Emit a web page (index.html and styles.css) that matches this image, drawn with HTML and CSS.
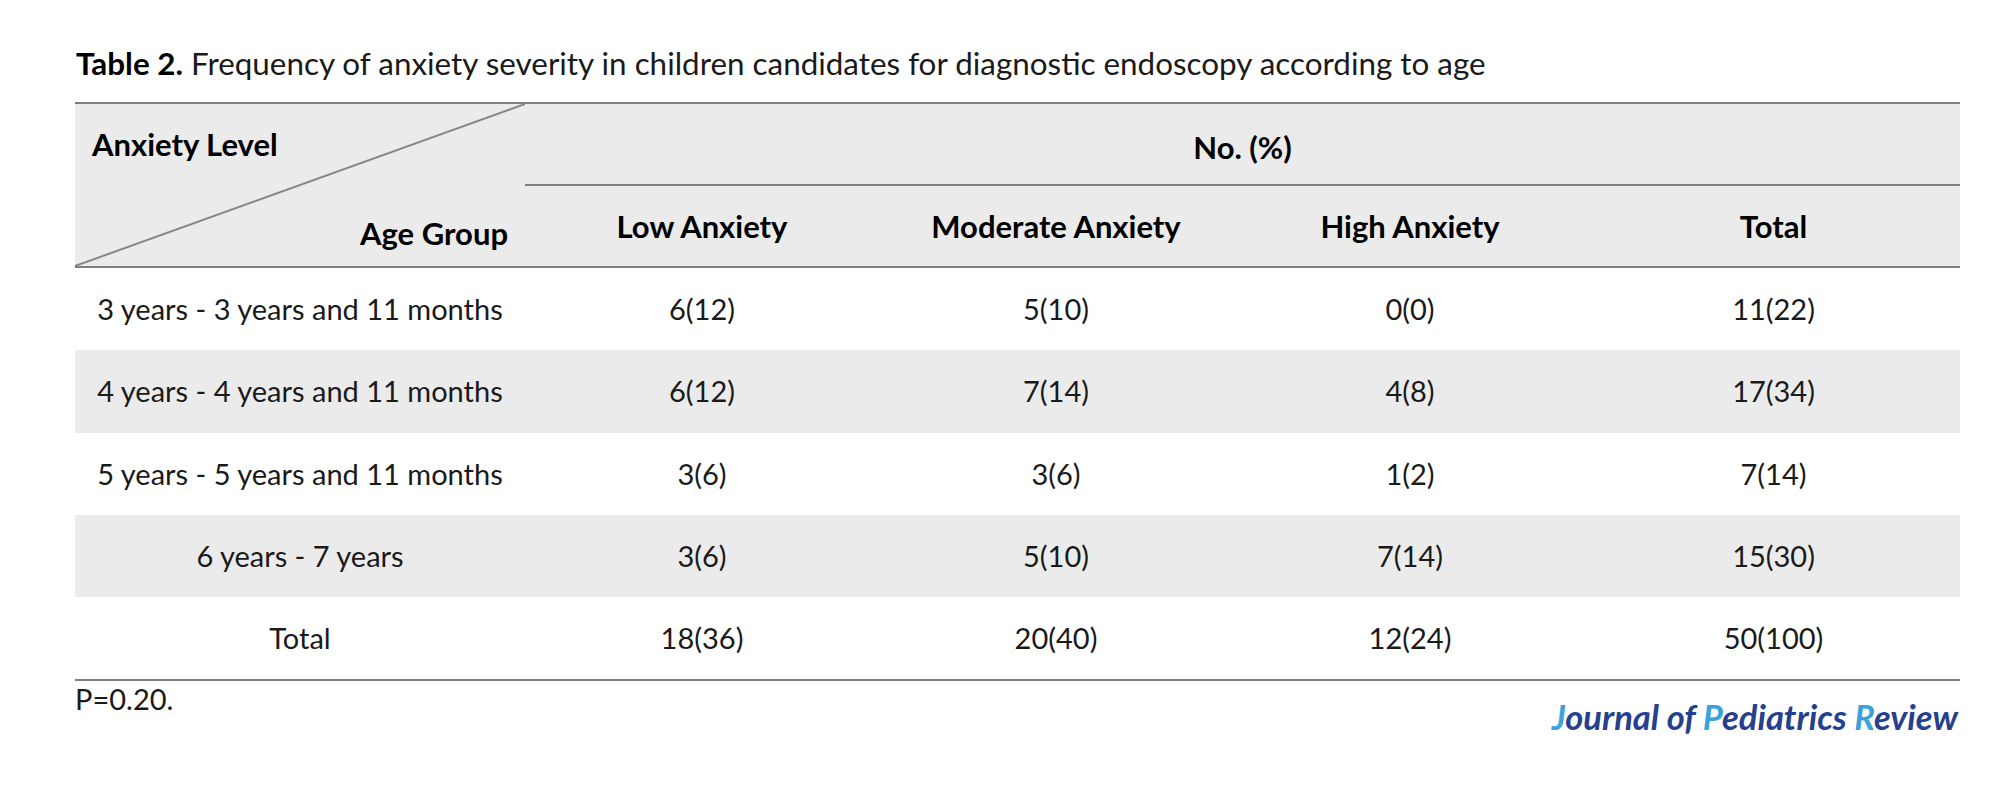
FILE: index.html
```html
<!DOCTYPE html>
<html lang="en">
<head>
<meta charset="utf-8">
<title>Table 2</title>
<link rel="stylesheet" href="styles.css">
</head>
<body>
<main class="page">
  <p class="caption"><strong>Table 2.</strong> Frequency of anxiety severity in children candidates for diagnostic endoscopy according to age</p>
  <table class="data">
    <colgroup>
      <col class="c-label">
      <col class="c-num">
      <col class="c-num">
      <col class="c-num">
      <col class="c-total">
    </colgroup>
    <thead>
      <tr class="h1">
        <th class="corner" rowspan="2">
          <div class="corner-inner">
            <span class="corner-top">Anxiety Level</span>
            <span class="corner-bottom">Age Group</span>
          </div>
        </th>
        <th class="span" colspan="4">No. (%)</th>
      </tr>
      <tr class="h2">
        <th>Low Anxiety</th>
        <th>Moderate Anxiety</th>
        <th>High Anxiety</th>
        <th>Total</th>
      </tr>
    </thead>
    <tbody>
      <tr><td>3 years - 3 years and 11 months</td><td>6(12)</td><td>5(10)</td><td>0(0)</td><td>11(22)</td></tr>
      <tr class="shade"><td>4 years - 4 years and 11 months</td><td>6(12)</td><td>7(14)</td><td>4(8)</td><td>17(34)</td></tr>
      <tr><td>5 years - 5 years and 11 months</td><td>3(6)</td><td>3(6)</td><td>1(2)</td><td>7(14)</td></tr>
      <tr class="shade"><td>6 years - 7 years</td><td>3(6)</td><td>5(10)</td><td>7(14)</td><td>15(30)</td></tr>
      <tr class="last"><td>Total</td><td>18(36)</td><td>20(40)</td><td>12(24)</td><td>50(100)</td></tr>
    </tbody>
  </table>
  <div class="foot">
    <p class="pval">P=0.20.</p>
    <p class="journal"><span class="hl">J</span>ournal of <span class="hl">P</span>ediatrics <span class="hl">R</span>eview</p>
  </div>
</main>
</body>
</html>
```

FILE: styles.css
```css
html, body {
  margin: 0;
  padding: 0;
  background: #ffffff;
}

body {
  font-family: Lato, "Open Sans", "Liberation Sans", sans-serif;
  color: #111111;
  font-size: 29px;
}

.page {
  width: 1885px;
  margin-left: 75px;
  padding-top: 45px;
}

.caption {
  margin: 0 0 21px 1px;
  line-height: 36px;
  font-size: 31.4px;
  color: #1a1a1a;
}

.caption strong {
  font-weight: 700;
  color: #000;
}

.data {
  width: 1885px;
  border-collapse: collapse;
  table-layout: fixed;
}

.c-label { width: 450px; }
.c-num { width: 354px; }
.c-total { width: 373px; }

.data th,
.data td {
  padding: 0;
  text-align: center;
  vertical-align: middle;
  line-height: 36px;
}

.data th {
  font-weight: 700;
  font-size: 31px;
  color: #000;
  background: #ebebeb;
}

.h1 th {
  border-top: 2px solid #7f7f7f;
  height: 80px;
}

.data .h1 .span {
  border-bottom: 2px solid #7f7f7f;
  padding-top: 6px;
  height: 74px;
}

.h2 th {
  height: 80px;
  border-bottom: 2px solid #7f7f7f;
}

.data .corner {
  border-bottom: 2px solid #7f7f7f;
  background: linear-gradient(to bottom right, rgba(235,235,235,0) calc(50% - 1.6px), #6e6e6e 50%, rgba(235,235,235,0) calc(50% + 1.6px)), #ebebeb;
}

.corner-inner {
  height: 162px;
  box-sizing: border-box;
  display: flex;
  flex-direction: column;
  justify-content: space-between;
  padding: 22px 17px 15px 17px;
}

.corner-top {
  text-align: left;
}

.corner-bottom {
  text-align: right;
}

.data td {
  height: 82.3px;
  color: #1a1a1a;
}

.shade td {
  background: #ebebeb;
}

.last td {
  border-bottom: 2px solid #7f7f7f;
}

.foot {
  display: flex;
  justify-content: space-between;
  align-items: flex-start;
}

.pval {
  margin: 0;
  line-height: 36px;
  color: #1a1a1a;
}

.journal {
  margin: 18px 2px 0 0;
  line-height: 36px;
  font-weight: 700;
  font-style: italic;
  font-size: 34.5px;
  color: #24408e;
}

.journal .hl {
  color: #3aa3dc;
}
```
